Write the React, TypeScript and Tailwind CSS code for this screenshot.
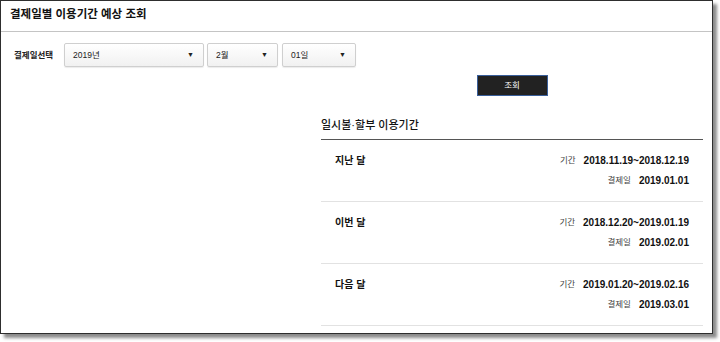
import React from 'react';

const font = { fontFamily: '"Liberation Sans", "Noto Sans CJK KR", sans-serif' };

const rows = [
  { name: '지난 달', period: '2018.11.19~2018.12.19', pay: '2019.01.01' },
  { name: '이번 달', period: '2018.12.20~2019.01.19', pay: '2019.02.01' },
  { name: '다음 달', period: '2019.01.20~2019.02.16', pay: '2019.03.01' },
];

function Select({ label, width }: { label: string; width: string }) {
  return (
    <div
      className={`${width} h-[24px] flex items-center justify-between pl-[8px] pr-[9px] border border-[#cfcfcf] rounded-[2px] bg-gradient-to-b from-white to-[#f1f1f1] shadow-[0_1px_1px_rgba(0,0,0,0.08)]`}
    >
      <span className="text-[8.5px] text-[#222]">{label}</span>
      <span className="text-[7px] text-[#222]">▼</span>
    </div>
  );
}

export default function App() {
  return (
    <div className="w-[720px] h-[342px] bg-white" style={font}>
      <div className="w-[713px] h-[334px] border border-[#2e2e2e] bg-white shadow-[4px_4px_3px_rgba(0,0,0,0.45)] flex flex-col">
        <div className="h-[31px] border-b border-[#c4c4c4] flex items-center pl-[9px] pb-[3px]">
          <h1 className="text-[11.5px] font-bold text-[#111]">결제일별 이용기간 예상 조회</h1>
        </div>

        <div className="flex items-center mt-[11px] pl-[13px]">
          <span className="text-[8.5px] font-bold text-[#222] w-[50px]">결제일선택</span>
          <Select label="2019년" width="w-[140px]" />
          <Select label="2월" width="w-[71px] ml-[3px]" />
          <Select label="01일" width="w-[74px] ml-[4px]" />
        </div>

        <div className="ml-[320px] w-[382px] flex flex-col">
          <div className="flex justify-center mt-[8px]">
            <button className="w-[71px] h-[21px] bg-[#222] border border-[#3a5f9a] text-white text-[8.5px]">
              조회
            </button>
          </div>

          <div className="mt-[21px] pb-[5px] border-b border-[#555]">
            <h2 className="text-[11px] font-medium text-[#111]">일시불·할부 이용기간</h2>
          </div>

          {rows.map((r) => (
            <div key={r.name} className="h-[62px] border-b border-[#e2e2e2] flex justify-between pl-[14px] pr-[14px] pt-[11px]">
              <div className="h-[20px] flex items-center text-[10px] font-bold text-[#111]">{r.name}</div>
              <div className="flex flex-col items-end">
                <div className="h-[20px] flex items-center gap-[8px]">
                  <span className="text-[8.5px] text-[#444]">기간</span>
                  <span className="text-[10px] font-bold text-[#111]">{r.period}</span>
                </div>
                <div className="h-[20px] flex items-center gap-[8px]">
                  <span className="text-[8.5px] text-[#444]">결제일</span>
                  <span className="text-[10px] font-bold text-[#111]">{r.pay}</span>
                </div>
              </div>
            </div>
          ))}
        </div>
      </div>
    </div>
  );
}
